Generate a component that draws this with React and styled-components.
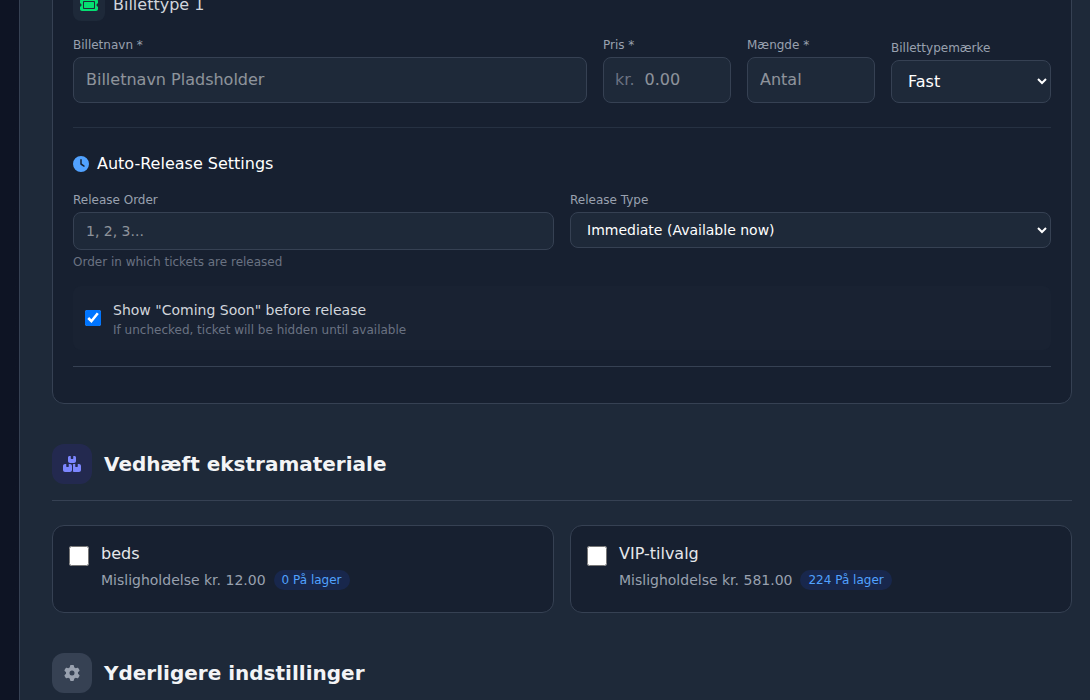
import React, { useState } from 'react'
import styled, { createGlobalStyle } from 'styled-components';
import { FaTicket, FaClock, FaBoxesStacked, FaGear } from 'react-icons/fa6';

const addons = [
  { id: 1, name: 'beds', price: '12.00', stock: 0 },
  { id: 2, name: 'VIP-tilvalg', price: '581.00', stock: 224 },
]

function TicketType() {
  const [comingSoon, setComingSoon] = useState(true);
  return (
    <TicketCard>
      <TicketHeader>
        <TicketIcon><FaTicket size={18} /></TicketIcon>
        <span>Billettype 1</span>
      </TicketHeader>
      <FieldRow>
        <Field>
          <Label>Billetnavn *</Label>
          <Input placeholder="Billetnavn Pladsholder" />
        </Field>
        <Field $width="128px">
          <Label>Pris *</Label>
          <PriceBox>
            <span>kr.</span>
            <input placeholder="0.00" />
          </PriceBox>
        </Field>
        <Field $width="128px">
          <Label>Mængde *</Label>
          <Input placeholder="Antal" />
        </Field>
        <Field $width="160px">
          <Label>Billettypemærke</Label>
          <Select>
            <option>Fast</option>
          </Select>
        </Field>
      </FieldRow>
      <ReleaseSettings>
        <ReleaseTitle>
          <FaClock size={16} />
          <h4>Auto-Release Settings</h4>
        </ReleaseTitle>
        <ReleaseGrid>
          <Field>
            <Label>Release Order</Label>
            <Input $small placeholder="1, 2, 3..." />
            <Hint>Order in which tickets are released</Hint>
          </Field>
          <Field>
            <Label>Release Type</Label>
            <Select $small>
              <option>Immediate (Available now)</option>
            </Select>
          </Field>
        </ReleaseGrid>
        <ComingSoon>
          <Checkbox
            type="checkbox"
            $size="16px"
            checked={comingSoon}
            onChange={(e) => setComingSoon(e.target.checked)}
          />
          <div>
            <h5>Show "Coming Soon" before release</h5>
            <p>If unchecked, ticket will be hidden until available</p>
          </div>
        </ComingSoon>
      </ReleaseSettings>
      <CardEnd />
    </TicketCard>
  )
}

function Addon({name,price,stock}) {
  return (
    <AddonCard>
      <Checkbox type="checkbox" $size="20px" />
      <AddonDetails>
        <h4>{name}</h4>
        <AddonPrice>
          <span>Misligholdelse kr. {price}</span>
          <Stock>{stock} På lager</Stock>
        </AddonPrice>
      </AddonDetails>
    </AddonCard>
  )
}

export default function App() {
  return (
    <Page>
      <GlobalStyle />
      <Panel>
        <TicketType />
        <SectionHeader>
          <SectionIcon $bg="rgba(49,44,133,0.3)" $color="#7c86ff"><FaBoxesStacked size={18} /></SectionIcon>
          <h2>Vedhæft ekstramateriale</h2>
        </SectionHeader>
        <AddonGrid>
          {addons.map((a) => <Addon key={a.id} {...a} />)}
        </AddonGrid>
        <SectionHeader>
          <SectionIcon $bg="#364153" $color="#99a1af"><FaGear size={16} /></SectionIcon>
          <h2>Yderligere indstillinger</h2>
        </SectionHeader>
      </Panel>
    </Page>
  )
}

const GlobalStyle = createGlobalStyle`
  *{
    box-sizing:border-box;
  }
  body{
    margin:0;
    background:#101828;
    font-family:'DejaVu Sans', sans-serif;
    font-size:16px;
    line-height:24px;
    color:#fff;
    overflow:hidden;
  }
  h2,h4,h5,p{
    margin:0;
    font-weight:400;
  }
  input,select{
    font-family:inherit;
    color:#fff;
  }
`
const Page = styled.div`
  height:700px;
  overflow:hidden;
  padding-left:19px;
  background:linear-gradient(to right, #0e1424, #0f1625);
`
const Panel = styled.div`
  width:1086px;
  margin-top:-32px;
  padding:0 32px 40px;
  background:#1e2939;
  border:1px solid #364153;
  border-top:0;
`
const TicketCard = styled.div`
  padding:20px;
  background:rgba(16,24,40,0.5);
  border:1px solid #364153;
  border-radius:12px;
`
const TicketHeader = styled.div`
  display:flex;
  align-items:center;
  gap:8px;
  margin-bottom:16px;
  color:#d1d5dc;
`
const TicketIcon = styled.div`
  width:32px;
  height:32px;
  display:flex;
  align-items:center;
  justify-content:center;
  background:#1e2939;
  border-radius:8px;
  color:#05df72;
`
const FieldRow = styled.div`
  display:flex;
  align-items:flex-end;
  gap:16px;
`
const Field = styled.div`
  display:flex;
  flex-direction:column;
  min-width:0;
  flex:${(p) => (p.$width ? `0 0 ${p.$width}` : '1')};
`
const Label = styled.label`
  margin-bottom:4px;
  font-size:12px;
  line-height:16px;
  color:#99a1af;
`
const Input = styled.input`
  width:100%;
  height:${(p) => (p.$small ? '38px' : '46px')};
  padding:${(p) => (p.$small ? '0 12px' : '0 12px 2px')};
  font-size:${(p) => (p.$small ? '14px' : '16px')};
  background:#1e2939;
  border:1px solid #364153;
  border-radius:8px;
  &::placeholder{
    color:rgba(255,255,255,0.5);
  }
`
const PriceBox = styled.div`
  height:46px;
  padding:0 11px;
  display:flex;
  align-items:center;
  gap:10px;
  background:#1e2939;
  border:1px solid #364153;
  border-radius:8px;
  color:#6a7282;
  input{
    flex:1;
    min-width:0;
    padding:0 0 2px;
    font-size:16px;
    background:none;
    border:0;
  }
  input::placeholder{
    color:rgba(255,255,255,0.5);
  }
`
const Select = styled.select`
  width:100%;
  height:${(p) => (p.$small ? '36px' : '43px')};
  padding:0 12px;
  font-size:${(p) => (p.$small ? '14px' : '16px')};
  background:#1e2939;
  border:1px solid #364153;
  border-radius:8px;
`
const ReleaseSettings = styled.div`
  margin-top:24px;
  padding-top:24px;
  border-top:1px solid rgba(54,65,83,0.5);
`
const ReleaseTitle = styled.div`
  display:flex;
  align-items:center;
  gap:8px;
  margin-bottom:16px;
  svg{
    color:#51a2ff;
  }
`
const ReleaseGrid = styled.div`
  display:grid;
  grid-template-columns:1fr 1fr;
  gap:16px;
`
const Hint = styled.p`
  margin-top:4px;
  font-size:12px;
  line-height:16px;
  color:#6a7282;
`
const ComingSoon = styled.div`
  display:flex;
  align-items:center;
  gap:12px;
  margin-top:16px;
  padding:12px;
  background:rgba(30,41,57,0.3);
  border-radius:8px;
  h5{
    font-size:14px;
    color:#d1d5dc;
  }
  p{
    font-size:12px;
    line-height:16px;
    color:#6a7282;
  }
`
const Checkbox = styled.input`
  flex-shrink:0;
  width:${(p) => p.$size};
  height:${(p) => p.$size};
  margin:0;
`
const CardEnd = styled.div`
  margin-top:16px;
  height:17px;
  border-top:1px solid #364153;
`
const SectionHeader = styled.div`
  display:flex;
  align-items:center;
  gap:12px;
  margin:40px 0 24px;
  padding-bottom:16px;
  border-bottom:1px solid #364153;
  h2{
    font-size:20px;
    line-height:28px;
    font-weight:700;
    color:#f3f4f6;
  }
`
const SectionIcon = styled.div`
  width:40px;
  height:40px;
  display:flex;
  align-items:center;
  justify-content:center;
  background:${(p) => p.$bg};
  color:${(p) => p.$color};
  border-radius:12px;
`
const AddonGrid = styled.div`
  display:grid;
  grid-template-columns:1fr 1fr;
  gap:16px;
`
const AddonCard = styled.div`
  height:88px;
  padding:16px;
  display:flex;
  gap:12px;
  background:rgba(16,24,40,0.5);
  border:1px solid #364153;
  border-radius:12px;
  ${Checkbox}{
    margin-top:4px;
  }
`
const AddonDetails = styled.div`
  h4{
    color:#e5e7eb;
  }
`
const AddonPrice = styled.div`
  display:flex;
  align-items:center;
  gap:8px;
  margin-top:4px;
  font-size:14px;
  line-height:20px;
  color:#99a1af;
`
const Stock = styled.span`
  padding:2px 8px;
  font-size:12px;
  line-height:16px;
  color:#51a2ff;
  background:rgba(28,57,142,0.3);
  border-radius:10px;
`
